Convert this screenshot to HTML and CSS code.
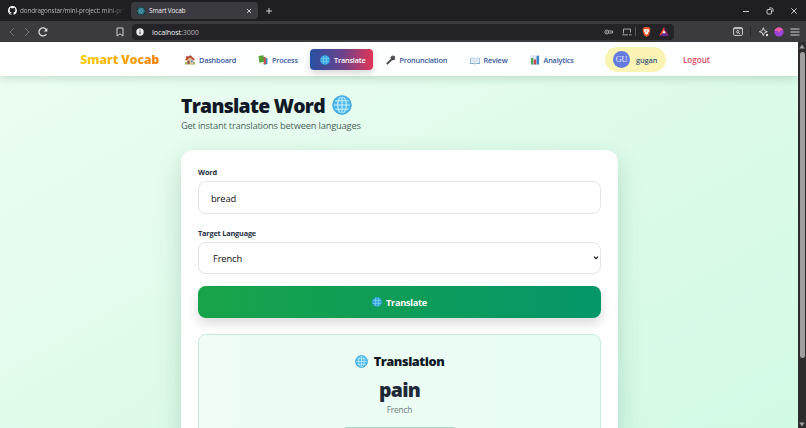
FILE: index.html
```html
<!DOCTYPE html>
<html lang="en">
<head>
    <meta charset="UTF-8">
    <meta name="viewport" content="width=device-width, initial-scale=1.0">
    <title>Smart Vocab</title>
    <link rel="stylesheet" href="styles.css">
</head>
<body>
    <svg class="defs" width="0" height="0">
        <symbol id="globe" viewBox="0 0 20 20">
            <circle cx="10" cy="10" r="9.6" fill="#4fb9ee"/>
            <g fill="none" stroke="#c9effb" stroke-width="1.1">
                <ellipse cx="10" cy="10" rx="4.3" ry="8.500"/>
                <path d="M10 1.500v17M1.500 10h17M3 5.800h14M3 14.200h14"/>
            </g>
            <circle cx="10" cy="10" r="9" fill="none" stroke="#48aee6" stroke-width="1.4"/>
        </symbol>
        <symbol id="globe-small" viewBox="0 0 10 10">
            <circle cx="5" cy="5" r="4.800" fill="#36a5df"/>
            <path d="M3.500 1v8M6.500 1v8M.8 3.500h8.400M.8 6.500h8.400" fill="none" stroke="#8bd6f3" stroke-width=".6"/>
        </symbol>
    </svg>

    <!-- Browser window -->
    <div class="tab-strip">
        <div class="tab">
            <svg class="favicon" viewBox="0 0 16 16"><path fill="#fff" d="M8 0a8 8 0 0 0-2.5 15.6c.4 0 .5-.2.5-.4v-1.500c-2.200.5-2.700-.9-2.700-.9-.4-.9-.9-1.200-.9-1.200-.7-.5.1-.5.1-.5.8.1 1.200.8 1.200.8.700 1.200 1.900.9 2.300.700.1-.5.300-.9.500-1.100-1.800-.2-3.600-.9-3.600-4 0-.9.300-1.600.8-2.100-.1-.2-.4-1 .1-2.100 0 0 .7-.2 2.200.8a7.500 7.500 0 0 1 4 0c1.500-1 2.200-.8 2.200-.8.400 1.100.2 1.900.1 2.100.5.600.8 1.300.8 2.100 0 3.100-1.900 3.700-3.700 3.900.3.300.6.8.6 1.500v2.200c0 .2.100.5.500.4A8 8 0 0 0 8 0z"/></svg>
            <span class="tab-title">dondragonstar/mini-project: mini-pr</span>
        </div>
        <div class="tab tab-active">
            <svg class="favicon-react" viewBox="0 0 16 16"><rect width="16" height="16" rx="3" fill="#193b43"/><g fill="none" stroke="#58c4dc" stroke-width="1"><ellipse cx="8" cy="8" rx="7" ry="2.700"/><ellipse cx="8" cy="8" rx="7" ry="2.700" transform="rotate(60 8 8)"/><ellipse cx="8" cy="8" rx="7" ry="2.700" transform="rotate(120 8 8)"/></g><circle cx="8" cy="8" r="1.500" fill="#58c4dc"/></svg>
            <span class="tab-title">Smart Vocab</span>
            <svg class="tab-close" viewBox="0 0 6 6"><path d="M1 1l4 4M5 1L1 5"/></svg>
        </div>
        <svg class="new-tab" viewBox="0 0 6 6"><path d="M3 0v6M0 3h6"/></svg>
        <div class="window-buttons">
            <svg viewBox="0 0 8 8"><path d="M1 4.500h6"/></svg>
            <svg viewBox="0 0 8 8"><rect x="1" y="2.500" width="4.500" height="4.500" rx="1"/><path d="M3 1h2.500q1.500 0 1.500 1.500V5"/></svg>
            <svg viewBox="0 0 8 8"><path d="M1.300 1.300l5.400 5.400M6.700 1.300L1.300 6.700"/></svg>
        </div>
    </div>
    <div class="toolbar">
        <svg class="arrow" viewBox="0 0 8 10"><path d="M6 1L2 5l4 4"/></svg>
        <svg class="arrow forward" viewBox="0 0 8 10"><path d="M2 1l4 4-4 4"/></svg>
        <svg class="reload" viewBox="0 0 10 10"><path d="M8.400 7A4 4 0 1 1 8.300 2.700"/><path class="solid" d="M9.400 1v3.600H5.800z"/></svg>
        <svg class="bookmark" viewBox="0 0 8 10"><path d="M1 1h6v8L4 6.800 1 9z"/></svg>
        <div class="address">
            <svg class="info" viewBox="0 0 8 8"><circle cx="4" cy="4" r="3.700" fill="#eee"/><path d="M4 1.700v1M4 3.500v2.800" stroke="#333" stroke-width="1"/></svg>
            <span class="url">localhost<span class="port">:3000</span></span>
            <svg class="key" viewBox="0 0 10 6"><circle cx="2.800" cy="3" r="2"/><path d="M4.800 2h3.700v2H4.800"/><circle cx="2.800" cy="3" r=".4"/></svg>
            <svg class="install" viewBox="0 0 10 8"><path d="M1.500 5.500V1h7v3.500M.3 6.800h5.700M7 6.800h2.600"/></svg>
            <span class="divider"></span>
            <svg class="shield" viewBox="0 0 10 11"><path fill="#f4572b" d="M2.500 0h5l1 1.200 1 .3-.5 2 .2 1L7.800 9 5 11 2.200 9 .8 4.500l.2-1-.5-2 1-.3z"/><path fill="#fff" d="M2.500 2.500h5l.7 2-1.700 1.700.2 1L5 8.600 3.300 7.200l.2-1-1.700-1.700z"/><path d="M3.500 4l1 .5M6.500 4l-1 .5M5 4v2"/></svg>
            <svg class="bat" viewBox="0 0 10 9"><path fill="#ff4724" d="M5 0L0 9l5-3z"/><path fill="#9e1f63" d="M5 0l5 9-5-3z"/><path fill="#662d91" d="M0 9h10L5 5.800z"/><path fill="#fff" d="M5 3L3.300 6.200h3.400z"/></svg>
        </div>
        <div class="toolbar-actions">
            <svg class="sidebar-icon" viewBox="0 0 10 9"><rect x=".6" y=".6" width="8.800" height="7.800" rx="1"/><path d="M.6 1.700h8.800"/><circle cx="4.800" cy="4.800" r="1.200"/><path d="M5.800 5.800l1 1"/></svg>
            <span class="divider"></span>
            <svg class="spark" viewBox="0 0 10 10"><path d="M4.300.8l1.100 2.800L8.300 4.700 5.400 5.800 4.300 8.600 3.200 5.800.4 4.700l2.800-1.100z"/><circle class="solid" cx="8" cy="8" r="1.200"/></svg>
            <svg class="profile" viewBox="0 0 10 10"><circle cx="5" cy="5" r="4.600" fill="#9e43d8"/><path fill="#f15da6" d="M.5 4A4.600 4.600 0 0 1 9 2.800L7 3.500 5.500 5 3 3.800z"/></svg>
            <svg class="menu" viewBox="0 0 10 8"><path d="M.5 1h9M.5 4h9M.5 7h9"/></svg>
        </div>
    </div>

    <div class="viewport">
        <div class="page">
            <nav class="navbar">
                <div class="brand"><span>Smart Vocab</span></div>
                <a class="nav-item dashboard">
                    <svg viewBox="0 0 10 10"><path fill="#8bb34a" d="M0 7h10v2.500H0z"/><path fill="#e2c29c" d="M1.500 4L5 1.500 8.500 4v5h-7z"/><path fill="#b7472f" d="M0 4.600L4.500.5h1.200L10 4.600 8.800 5.500 5 2.500 1.200 5.500zM1.200 1h1.500v2H1.200z"/><path fill="#8b4e36" d="M2.500 5.500h2V9h-2z"/><path fill="#4c9ed9" d="M5.800 5.500h2v1.800h-2z"/></svg>
                    <span>Dashboard</span>
                </a>
                <a class="nav-item process">
                    <svg viewBox="0 0 10 10"><path fill="#3e8dcb" d="M6 3.500l3.500-.5v6l-3.500.8z"/><path fill="#c94b50" d="M4.500 2.200l3-.5.5 7-2.500.6z"/><path fill="#54a536" d="M.5 1l5-.7L6 7.500l-4.500.8z"/><path fill="#e3edda" d="M1.500 7.600L6 6.900l.1 1-4 .8z"/></svg>
                    <span>Process</span>
                </a>
                <a class="nav-item translate active">
                    <svg><use href="#globe-small"/></svg>
                    <span>Translate</span>
                </a>
                <a class="nav-item pronunciation">
                    <svg viewBox="0 0 10 10"><path d="M.8 9.200L6 4" stroke="#444" stroke-width="1.800"/><circle cx="7" cy="2.900" r="2.300" fill="#5d5961"/><path d="M5 2.500l2.500 2.600" stroke="#24232a" stroke-width="1"/></svg>
                    <span>Pronunciation</span>
                </a>
                <a class="nav-item review">
                    <svg viewBox="0 0 10 10"><path fill="#82aed8" d="M0 3h10v6H6L5 9.500 4 9H0z"/><path fill="#e5edf5" d="M.7 1.800Q3 1.200 5 2.600 7 1.200 9.300 1.800v6.300Q7 7.500 5 8.600 3 7.500.7 8.100z"/><path d="M5 2.600v6M1.700 3.500h2.200M1.700 5h2.200M6.200 3.500h2.200M6.200 5h2.200" stroke="#b9c9da" stroke-width=".5"/></svg>
                    <span>Review</span>
                </a>
                <a class="nav-item analytics">
                    <svg viewBox="0 0 10 10"><rect x=".3" y=".3" width="9.400" height="9.400" fill="#dce6ef"/><path fill="#4da854" d="M1 3h2.300v6.500H1z"/><path fill="#d1434f" d="M3.800 4.500h2.300v5H3.800z"/><path fill="#347fc4" d="M6.600.8h2.300v8.700H6.600z"/></svg>
                    <span>Analytics</span>
                </a>
                <div class="user">
                    <span class="avatar">GU</span>
                    <span class="username">gugan</span>
                </div>
                <a class="logout">Logout</a>
            </nav>

            <main class="container">
                <h1><span>Translate Word</span><svg><use href="#globe"/></svg></h1>
                <p class="subtitle">Get instant translations between languages</p>

                <div class="card">
                    <label>Word</label>
                    <div class="field">bread</div>
                    <label>Target Language</label>
                    <div class="field select">
                        <span>French</span>
                        <svg viewBox="0 0 6 4"><path d="M1 .7l2 2 2-2"/></svg>
                    </div>
                    <div class="btn"><svg><use href="#globe-small"/></svg><span>Translate</span></div>

                    <div class="result">
                        <h2><svg><use href="#globe"/></svg><span>Translation</span></h2>
                        <div class="result-word">pain</div>
                        <div class="result-lang">French</div>
                        <div class="listen"></div>
                    </div>
                </div>
            </main>
        </div>
        <div class="scrollbar">
            <svg viewBox="0 0 6 5"><path d="M3 .5L5.700 4.500H.3z"/></svg>
            <div class="thumb"></div>
            <svg viewBox="0 0 6 5"><path d="M3 4.500L.3.500h5.400z"/></svg>
        </div>
    </div>
</body>
</html>
```
FILE: styles.css
```css
* {
    box-sizing: border-box;
}
body {
    margin: 0;
    width: 806px;
    height: 428px;
    overflow: hidden;
    display: flex;
    flex-direction: column;
    font-family: 'Open Sans', 'Noto Sans', sans-serif;
    color: #111827;
    white-space: nowrap;
}
svg {
    display: block;
    flex: none;
}
.defs {
    position: absolute;
}

/* Browser window */
.tab-strip {
    display: flex;
    align-items: center;
    height: 21px;
    flex: none;
    background-color: #1f1e23;
}
.tab-strip svg path,
.tab-strip .window-buttons rect {
    stroke-width: 0.9;
}
.tab {
    display: flex;
    align-items: center;
    width: 123px;
    height: 17px;
    padding-left: 8px;
    color: #b5b4ba;
}
.tab .tab-title {
    width: 104px;
    margin-left: 3px;
    font-size: 6.3px;
    letter-spacing: -0.11px;
    -webkit-mask-image: linear-gradient(to right, #000 82%, rgba(0, 0, 0, 0.2));
}
.favicon {
    width: 9px;
    height: 9px;
}
.favicon path {
    stroke: none;
}
.tab-active {
    width: 127px;
    margin-left: 8px;
    padding-left: 6px;
    border-radius: 4px;
    background-color: #3b3a40;
    color: #eee;
}
.tab-active .tab-title {
    width: 97px;
    margin-left: 4px;
    font-size: 6.5px;
    letter-spacing: -0.18px;
    -webkit-mask-image: none;
}
.favicon-react {
    width: 8px;
    height: 8px;
}
.tab-close,
.new-tab {
    width: 6px;
    height: 6px;
    fill: none;
    stroke: #ddd;
}
.new-tab {
    margin-left: 8px;
}
.window-buttons {
    display: flex;
    gap: 16px;
    margin-left: auto;
    padding-right: 8px;
}
.window-buttons svg {
    width: 8px;
    height: 8px;
    fill: none;
    stroke: #ddd;
}
.toolbar {
    display: flex;
    align-items: center;
    height: 21px;
    flex: none;
    padding-left: 8px;
    background-color: #3b3a3f;
}
.toolbar svg {
    fill: none;
    stroke: #dedee2;
    stroke-width: 0.9;
}
.toolbar .solid {
    fill: #dedee2;
    stroke: none;
}
.toolbar .arrow {
    width: 8px;
    height: 10px;
    stroke: #77767c;
}
.forward {
    margin-left: 7px;
}
.reload {
    width: 10px;
    height: 10px;
    margin-left: 7px;
}
.reload path {
    stroke-width: 1.3;
}
.bookmark {
    width: 8px;
    height: 10px;
    margin-left: 68px;
}
.address {
    display: flex;
    align-items: center;
    width: 542px;
    height: 16px;
    margin-left: 8px;
    padding: 0 5px 0 4px;
    border-radius: 4px;
    background-color: #242328;
}
.info {
    width: 8px;
    height: 8px;
}
.address .info circle,
.address .bat path {
    stroke: none;
}
.address .shield path {
    stroke: #f4572b;
    stroke-width: 0.6;
}
.address .shield path[fill] {
    stroke: none;
}
.url {
    margin-left: 8px;
    color: #eee;
    font-size: 7.2px;
    letter-spacing: -0.12px;
}
.port {
    color: #b0afb5;
}
.address .key,
.address .install {
    stroke: #b4b3b9;
}
.key {
    width: 10px;
    height: 6px;
    margin-left: auto;
}
.install {
    width: 10px;
    height: 8px;
    margin-left: 8px;
}
.divider {
    width: 1px;
    height: 9px;
    margin-left: 3px;
    background-color: #55545a;
}
.shield {
    width: 9px;
    height: 10px;
    margin-left: 6px;
}
.bat {
    width: 10px;
    height: 9px;
    margin-left: 8px;
}
.toolbar-actions {
    display: flex;
    align-items: center;
    margin-left: 59px;
}
.sidebar-icon {
    width: 10px;
    height: 9px;
}
.toolbar-actions .divider {
    margin-left: 7px;
    background-color: #29282c;
}
.spark {
    width: 10px;
    height: 10px;
    margin-left: 8px;
}
.profile {
    width: 10px;
    height: 10px;
    margin-left: 5px;
}
.toolbar .profile {
    stroke: none;
}
.menu {
    width: 10px;
    height: 8px;
    margin-left: 6px;
}

/* Page */
.viewport {
    display: flex;
    height: 386px;
}
.page {
    width: 798px;
    overflow: hidden;
    background: linear-gradient(150deg, #eefdf3 0%, #dffbea 50%, #d1fae5 100%);
}
.navbar {
    display: flex;
    align-items: center;
    height: 34px;
    padding-left: 80px;
    background: linear-gradient(to right, #fff, #fbfffd);
    box-shadow: 0 2px 9px rgba(20, 83, 45, 0.2);
}
.brand {
    width: 95px;
    padding-top: 1px;
    font-size: 12.4px;
    font-weight: 800;
    letter-spacing: -0.17px;
}
.brand span {
    background: linear-gradient(to right, #fcd00c, #f5820b);
    -webkit-background-clip: text;
    background-clip: text;
    color: transparent;
}
.nav-item {
    display: flex;
    align-items: center;
    height: 21px;
    padding-top: 1px;
    padding-left: 10px;
    border-radius: 4px;
    color: #3658a0;
    font-size: 7.3px;
    font-weight: 600;
    letter-spacing: -0.17px;
}
.nav-item svg {
    width: 10px;
    height: 10px;
    margin-right: 4px;
}
.dashboard {
    width: 73px;
}
.process {
    width: 62px;
}
.translate {
    width: 62.5px;
}
.pronunciation {
    width: 84px;
    margin-left: 3px;
}
.review {
    width: 60px;
}
.analytics {
    width: 85.5px;
}
.nav-item.active {
    background: linear-gradient(to right, #2850a0, #67438c 50%, #e23558);
    color: #fff;
    box-shadow: 0 3px 7px rgba(0, 0, 0, 0.16);
}
.user {
    display: flex;
    align-items: center;
    width: 61px;
    height: 25px;
    padding-left: 8px;
    border-radius: 13px;
    background-color: #fbf3b4;
}
.avatar {
    width: 17px;
    height: 17px;
    border-radius: 50%;
    background-color: #637be0;
    color: #eef;
    font-family: 'Liberation Serif', serif;
    font-size: 8px;
    line-height: 17px;
    text-align: center;
}
.username {
    margin-left: 6px;
    padding-top: 1px;
    color: #345577;
    font-size: 7.3px;
    font-weight: 600;
    letter-spacing: -0.05px;
}
.logout {
    margin-left: 17px;
    padding-top: 1px;
    color: #d84762;
    font-size: 8.2px;
    font-weight: 600;
    letter-spacing: -0.08px;
}
.container {
    width: 437px;
    margin-left: 181px;
    padding-top: 16px;
}
h1 {
    display: flex;
    align-items: center;
    height: 26px;
    margin: 0;
    font-size: 19.4px;
    font-weight: 800;
    letter-spacing: -0.72px;
}
h1 svg {
    width: 20px;
    height: 20px;
    margin-left: 7px;
}
.subtitle {
    height: 16px;
    margin: 0 0 16px;
    color: #4b6360;
    font-size: 9.3px;
    letter-spacing: -0.19px;
    line-height: 15px;
}
.card {
    height: 330px;
    padding: 17px;
    border-radius: 12px;
    background-color: #fff;
    box-shadow: 0 10px 24px rgba(6, 78, 59, 0.19);
}
label {
    display: block;
    height: 14px;
    color: #253044;
    font-size: 7.3px;
    font-weight: 700;
    letter-spacing: -0.17px;
    line-height: 11px;
}
.field {
    display: flex;
    align-items: center;
    height: 33px;
    margin-bottom: 13.5px;
    padding-top: 1px;
    padding-left: 12px;
    border: 1px solid #e3e6e8;
    border-radius: 8px;
    color: #111;
    font-size: 9.4px;
    letter-spacing: -0.15px;
}
.select {
    justify-content: space-between;
    height: 32px;
    margin-bottom: 12.5px;
    padding: 1px 1px 0 14px;
}
.select svg {
    width: 6px;
    height: 4px;
    fill: none;
    stroke: #111;
    stroke-width: 1.2;
}
.btn {
    display: flex;
    align-items: center;
    justify-content: center;
    height: 32px;
    border-radius: 8px;
    background: linear-gradient(to right, #18a349, #059669);
    box-shadow: 0 6px 12px rgba(0, 0, 0, 0.14);
    color: #fff;
    font-size: 9.2px;
    font-weight: 700;
    letter-spacing: -0.28px;
}
.btn svg {
    width: 10px;
    height: 10px;
    margin-right: 4px;
}
.result {
    display: flex;
    flex-direction: column;
    align-items: center;
    height: 140px;
    margin-top: 16px;
    padding-top: 16px;
    border: 1px solid #c5efda;
    border-radius: 8px;
    background: linear-gradient(to right, #effdf4, #e9fdf4);
}
h2 {
    display: flex;
    align-items: center;
    height: 20px;
    margin: 0;
    font-size: 12.8px;
    font-weight: 800;
    letter-spacing: -0.45px;
}
h2 svg {
    width: 13px;
    height: 13px;
    margin-right: 6px;
}
.result-word {
    height: 31px;
    margin-top: 2px;
    color: #1f2937;
    font-size: 19.5px;
    font-weight: 800;
    letter-spacing: -0.8px;
    line-height: 33px;
}
.result-lang {
    height: 15px;
    color: #6b7d7c;
    font-size: 8.3px;
    letter-spacing: -0.15px;
    line-height: 12px;
}
.listen {
    width: 120px;
    height: 30px;
    margin-top: 8px;
    border-radius: 8px;
    background-color: #a9d8c5;
}

/* Scrollbar */
.scrollbar {
    display: flex;
    flex-direction: column;
    align-items: center;
    width: 8px;
    padding: 2px 0 1px;
    background-color: #2c2c2c;
}
.scrollbar svg {
    width: 6px;
    height: 5px;
    fill: #a0a0a0;
}
.thumb {
    width: 5px;
    height: 306px;
    margin: 3px 0 auto;
    border-radius: 3px;
    background-color: #9f9f9f;
}
```
